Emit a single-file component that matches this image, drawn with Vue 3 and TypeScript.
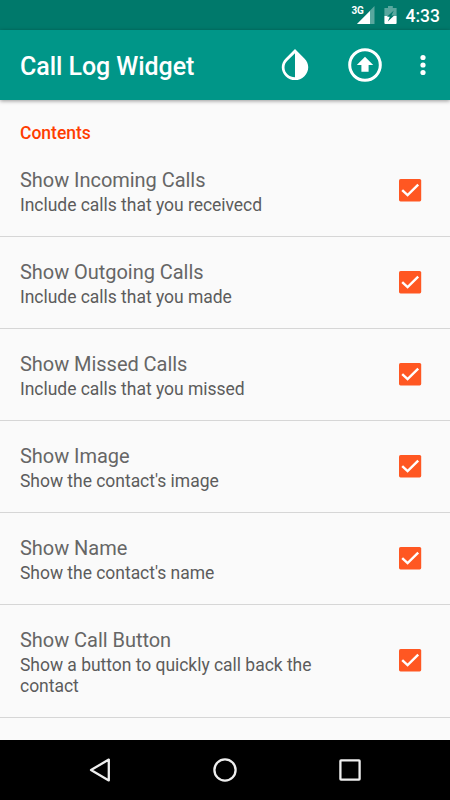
<script setup lang="ts">
import { ref } from 'vue'

interface Preference {
  title: string
  summary: string
  checked: boolean
}

const preferences = ref<Preference[]>([
  { title: 'Show Incoming Calls', summary: 'Include calls that you receivecd', checked: true },
  { title: 'Show Outgoing Calls', summary: 'Include calls that you made', checked: true },
  { title: 'Show Missed Calls', summary: 'Include calls that you missed', checked: true },
  { title: 'Show Image', summary: "Show the contact's image", checked: true },
  { title: 'Show Name', summary: "Show the contact's name", checked: true },
  { title: 'Show Call Button', summary: 'Show a button to quickly call back the contact', checked: true },
])

function toggle(item: Preference) {
  item.checked = !item.checked
}
</script>

<template>
  <div class="screen">
    <div class="status">
      <span class="network">3G</span>
      <svg class="signal" width="18" height="18" viewBox="0 0 18 18">
        <path d="M17.5 0V18H0Z" fill="#fff" fill-opacity=".35" />
        <path d="M13 5V18H0Z" fill="#fff" />
      </svg>
      <svg class="battery" width="13" height="18" viewBox="0 0 13 18">
        <path d="M4 0H8.8V2H12.6V10H.4V2H4Z" fill="#fff" fill-opacity=".35" />
        <path d="M.4 10H12.6V17Q12.6 18 11.6 18H1.4Q.4 18 .4 17Z" fill="#fff" />
        <path d="M9.8 4.6L3 10.8H5.8L3.8 15.6L10.2 9.4H7.4Z" fill="#00796b" />
      </svg>
      <span class="clock">4:33</span>
    </div>

    <header class="toolbar">
      <h1>Call Log Widget</h1>
      <svg class="drop" width="28" height="34" viewBox="0 0 28 34">
        <path d="M14 1L4.6 10.4C-.8 15.8 -.2 23.4 4.6 28.2C9.8 33.4 18.2 33.4 23.4 28.2C28.2 23.4 28.8 15.8 23.4 10.4Z" fill="#fff" />
        <path d="M14 5.2V29.2C8.6 29.2 3.5 25 3.5 19.4C3.5 16.6 4.6 14.4 6.6 12.5Z" fill="#009688" />
      </svg>
      <svg class="upload" width="36" height="36" viewBox="0 0 36 36">
        <circle cx="18" cy="18" r="15.3" fill="none" stroke="#fff" stroke-width="3" />
        <path d="M18 9.8L26.2 18H21.6V24.8H14.4V18H9.8Z" fill="#fff" />
      </svg>
      <svg class="more" width="6" height="22" viewBox="0 0 6 22">
        <circle cx="3" cy="3.5" r="2.6" fill="#fff" />
        <circle cx="3" cy="11" r="2.6" fill="#fff" />
        <circle cx="3" cy="18.5" r="2.6" fill="#fff" />
      </svg>
    </header>

    <main class="content">
      <h2>Contents</h2>
      <div v-for="item in preferences" :key="item.title" class="row" @click="toggle(item)">
        <div class="labels">
          <div class="title">{{ item.title }}</div>
          <div class="summary">{{ item.summary }}</div>
        </div>
        <svg class="check" width="24" height="24" viewBox="0 0 24 24">
          <template v-if="item.checked">
            <rect x="1" y="1" width="22.2" height="22.4" rx="1.6" fill="#ff5722" />
            <path d="M4.2 12.1L9.6 17.2L20.2 6.7" fill="none" stroke="#fff" stroke-width="2.4" />
          </template>
          <rect v-else x="2.2" y="2.2" width="20" height="20" rx="1.5" fill="none" stroke="#757575" stroke-width="2.4" />
        </svg>
      </div>
    </main>

    <nav class="navbar">
      <svg width="26" height="26" viewBox="0 0 26 26">
        <path d="M21.8 2.6V23.4L4 13Z" fill="none" stroke="#eee" stroke-width="2.3" stroke-linejoin="round" />
      </svg>
      <svg width="26" height="26" viewBox="0 0 26 26">
        <circle cx="13" cy="13" r="10.6" fill="none" stroke="#eee" stroke-width="2.3" />
      </svg>
      <svg width="26" height="26" viewBox="0 0 26 26">
        <rect x="3.4" y="3.4" width="19.2" height="19.2" rx=".6" fill="none" stroke="#eee" stroke-width="2.3" />
      </svg>
    </nav>
  </div>
</template>

<style>
body {
  margin: 0;
  overflow: hidden;
}
</style>

<style scoped>
.screen {
  display: flex;
  flex-direction: column;
  width: 450px;
  height: 800px;
  overflow: hidden;
  background: #fafafa;
  font-family: Roboto, "Liberation Sans", sans-serif;
}
.status {
  flex: none;
  display: flex;
  align-items: flex-start;
  justify-content: flex-end;
  box-sizing: border-box;
  height: 30px;
  padding: 6px 10px 0 0;
  background: #00796b;
  color: #fff;
}
.network {
  margin-right: -7px;
  font-size: 10px;
  font-weight: 700;
  line-height: 10px;
  letter-spacing: -.3px;
}
.signal {
  margin-right: 9.5px;
}
.battery {
  margin-right: 8.5px;
}
.clock {
  font-size: 17.5px;
  font-weight: 500;
  line-height: 20px;
}
.toolbar {
  flex: none;
  z-index: 1;
  display: flex;
  align-items: center;
  box-sizing: border-box;
  height: 70px;
  padding: 0 24.5px 0 20px;
  background: #009688;
  box-shadow: 0 1px 4px rgba(0, 0, 0, .4);
  color: #fff;
}
h1 {
  flex: 1;
  margin: 0;
  padding-top: 3px;
  font-size: 25px;
  font-weight: 500;
  line-height: 30px;
  letter-spacing: -.06px;
}
.drop {
  margin-right: 38px;
}
.upload {
  margin-right: 36.5px;
}
.content {
  flex: 1;
  min-height: 0;
  overflow: hidden;
}
h2 {
  margin: 0;
  padding: 23px 20px 2px;
  color: #ff3d00;
  font-size: 17.5px;
  font-weight: 500;
  line-height: 20px;
}
.row {
  display: flex;
  align-items: center;
  box-sizing: border-box;
  padding: 22px 28px 20px 20px;
  border-bottom: 1px solid #d6d6d6;
}
.labels {
  width: 330px;
  margin-right: auto;
}
.title {
  margin-bottom: 2px;
  color: #666;
  font-size: 20px;
  line-height: 26px;
  letter-spacing: -.04px;
}
.summary {
  color: #5c5c5c;
  font-size: 17.5px;
  line-height: 21px;
  letter-spacing: -.03px;
}
.check {
  flex: none;
  margin-bottom: 4px;
}
.navbar {
  flex: none;
  display: flex;
  align-items: center;
  justify-content: space-between;
  box-sizing: border-box;
  height: 60px;
  padding: 0 87px;
  background: #000;
}
</style>
